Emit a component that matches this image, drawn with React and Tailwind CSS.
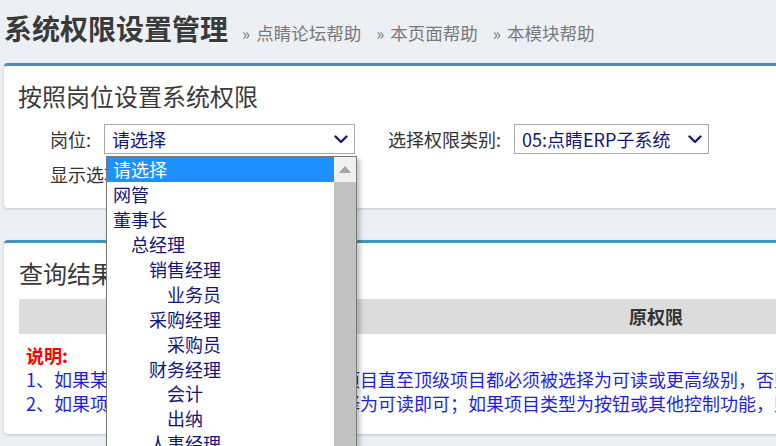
import React from 'react';

const FONT = { fontFamily: '"Noto Sans CJK SC", "Noto Sans", sans-serif' };

const options = [
  { label: '请选择', level: 0 },
  { label: '网管', level: 0 },
  { label: '董事长', level: 0 },
  { label: '总经理', level: 1 },
  { label: '销售经理', level: 2 },
  { label: '业务员', level: 3 },
  { label: '采购经理', level: 2 },
  { label: '采购员', level: 3 },
  { label: '财务经理', level: 2 },
  { label: '会计', level: 3 },
  { label: '出纳', level: 3 },
  { label: '人事经理', level: 2 },
  { label: '人事专员', level: 3 },
];

const indent = ['pl-[6px]', 'pl-[24px]', 'pl-[42px]', 'pl-[60px]'];

function Chevron() {
  return (
    <svg width="14" height="9" viewBox="0 0 14 9" className="shrink-0">
      <polyline points="1.5,1.5 7,7 12.5,1.5" fill="none" stroke="#1b1b6e" strokeWidth="2.4" strokeLinecap="round" strokeLinejoin="round" />
    </svg>
  );
}

function FakeSelect({ value, className }) {
  return (
    <div className={`h-[30px] border border-[#a9a9a9] bg-white flex items-center justify-between pl-[7px] pr-[6px] ${className}`}>
      <span className="text-[18px] text-[#14147a] leading-none">{value}</span>
      <Chevron />
    </div>
  );
}

function HelpLink({ children }) {
  return (
    <span className="flex items-baseline gap-[6px] text-[17.5px] text-[#7a7a7a] mr-[15px]">
      <span className="text-[17px]">»</span>
      {children}
    </span>
  );
}

export default function App() {
  return (
    <div className="relative w-[776px] h-[446px] overflow-hidden bg-[#eceff4]" style={FONT}>
      {/* Header */}
      <div className="flex items-baseline h-[63px] pl-[4px] pt-[6px]">
        <h1 className="text-[28px] font-bold text-[#3a3a3a] mr-[14px] leading-[44px]">系统权限设置管理</h1>
        <HelpLink>点睛论坛帮助</HelpLink>
        <HelpLink>本页面帮助</HelpLink>
        <HelpLink>本模块帮助</HelpLink>
      </div>

      {/* Panel 1 */}
      <div className="ml-[4px] w-[790px] h-[145px] bg-white border-t-[3px] border-[#4393bb] rounded-[4px] shadow-[0_1px_3px_rgba(0,0,0,0.18)] px-[14px] pt-[12px]">
        <h2 className="text-[24px] text-[#3a3a3a] leading-[36px]">按照岗位设置系统权限</h2>
        <div className="flex items-center mt-[10px] pl-[32px]">
          <span className="text-[18px] text-[#333] w-[54px]">岗位:</span>
          <FakeSelect value="请选择" className="w-[251px]" />
          <span className="text-[18px] text-[#333] ml-[33px] w-[126px]">选择权限类别:</span>
          <FakeSelect value="05:点睛ERP子系统" className="w-[195px]" />
        </div>
        <div className="pl-[32px] mt-[5px] text-[18px] text-[#333] leading-[30px]">显示选项:</div>
      </div>

      {/* Panel 2 */}
      <div className="ml-[4px] mt-[32px] w-[790px] h-[194px] bg-white border-t-[3px] border-[#4393bb] rounded-[4px] shadow-[0_1px_3px_rgba(0,0,0,0.18)] px-[15px] pt-[12px]">
        <h2 className="text-[24px] text-[#3a3a3a] leading-[36px]">查询结果</h2>
        <div className="mt-[8px] h-[35px] bg-[#dcdcdc] grid grid-cols-[420px_400px] items-center">
          <span className="text-center text-[18px] font-bold text-[#333]">权限项目</span>
          <span className="text-[18px] font-bold text-[#333] pl-[190px]">原权限</span>
        </div>
        <div className="mt-[9px] pl-[7px] text-[18px] leading-[24px]">
          <div className="font-bold text-[#ff0000]">说明:</div>
          <div className="text-[#1f1fdc] whitespace-nowrap">1、如果某个项目被授权，则该项目上级项目直至顶级项目都必须被选择为可读或更高级别，否则无法使用。</div>
          <div className="text-[#1f1fdc] whitespace-nowrap">2、如果项目类型为菜单或页面，只需选择为可读即可；如果项目类型为按钮或其他控制功能，则需选择相应级别。</div>
        </div>
      </div>

      {/* Open dropdown list */}
      <div className="absolute left-[106px] top-[156px] w-[251px] h-[300px] bg-white border border-[#7a7a7a] shadow-[3px_3px_5px_rgba(0,0,0,0.25)] flex">
        <div className="flex-1 flex flex-col">
          {options.map((o, i) => (
            <div
              key={o.label + i}
              className={`h-[24.9px] shrink-0 flex items-center text-[18px] leading-none ${indent[o.level]} ${i === 0 ? 'bg-[#1e90ff] text-white' : 'text-[#14147a]'}`}
            >
              {o.label}
            </div>
          ))}
        </div>
        <div className="w-[22px] flex flex-col bg-[#f0f0f0]">
          <div className="h-[25px] flex items-center justify-center">
            <svg width="12" height="7" viewBox="0 0 12 7">
              <polygon points="6,0 12,7 0,7" fill="#a3a3a3" />
            </svg>
          </div>
          <div className="flex-1 bg-[#c1c1c1]" />
        </div>
      </div>
    </div>
  );
}
